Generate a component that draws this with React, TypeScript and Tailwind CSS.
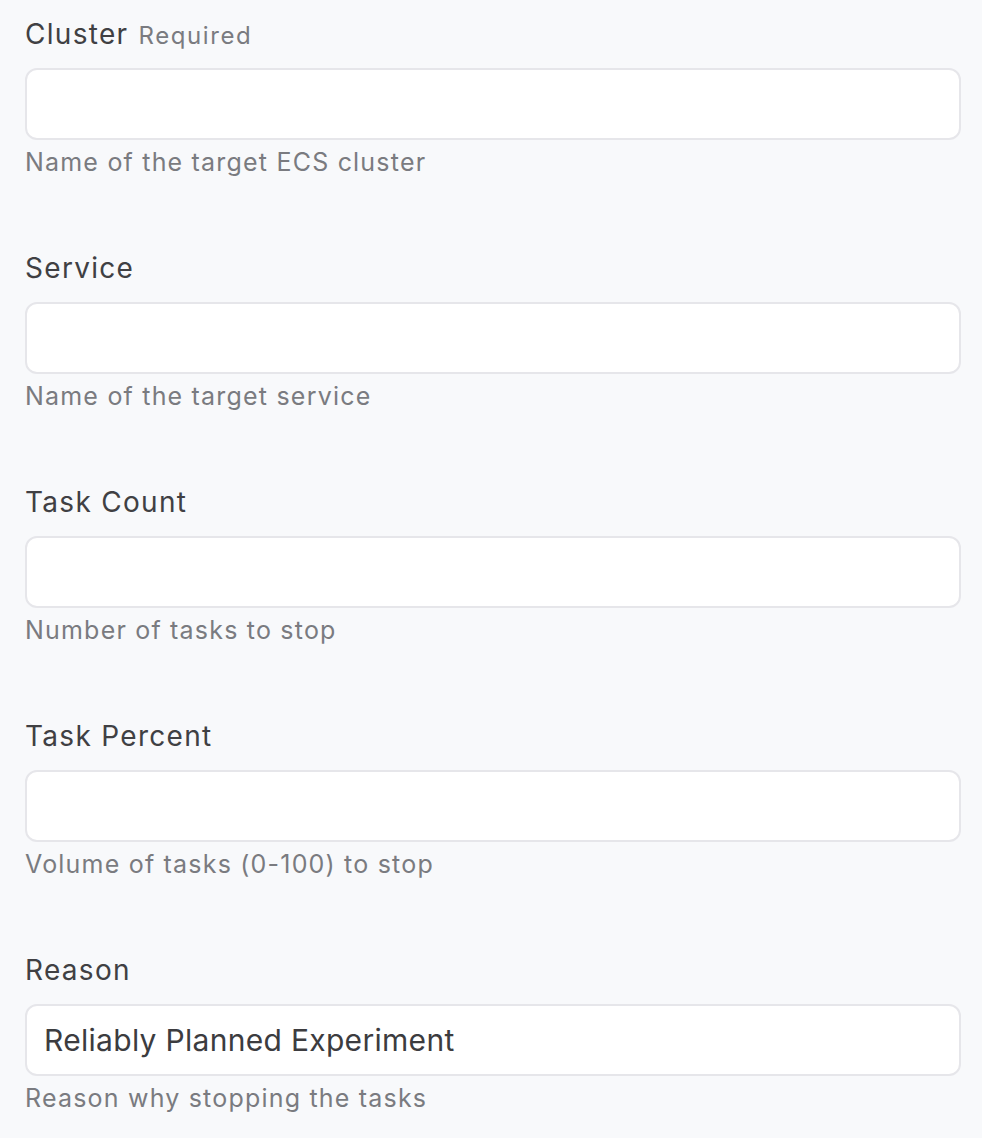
const fields = [
  { label: 'Cluster', required: true, help: 'Name of the target ECS cluster', value: '' },
  { label: 'Service', help: 'Name of the target service', value: '' },
  { label: 'Task Count', help: 'Number of tasks to stop', value: '' },
  { label: 'Task Percent', help: 'Volume of tasks (0-100) to stop', value: '' },
  { label: 'Reason', help: 'Reason why stopping the tasks', value: 'Reliably Planned Experiment' },
]

export default function App() {
  return (
    <div
      className="min-h-screen bg-[#f8f9fb] pl-[25px] pr-[21px] pt-[14px] pb-[22px]"
      style={{ fontFamily: 'Inter, "Noto Sans", sans-serif' }}
    >
      <div className="flex flex-col gap-[68px]">
        {fields.map(f => (
          <div key={f.label} className="flex flex-col">
            <label className="flex h-[40px] items-baseline text-[28px] leading-[40px] tracking-[1.3px] text-[#404043]">
              {f.label}
              {f.required && (
                <span className="ml-[10px] text-[24px] leading-none tracking-[1.6px] text-[#7a7b80]">Required</span>
              )}
            </label>
            <input
              defaultValue={f.value}
              className="mt-[14px] h-[72px] w-full rounded-[12px] border-2 border-[#e6e6ea] bg-white px-[17px] text-[30px] tracking-[0.3px] text-[#3c3c3f] outline-none"
            />
            <p className="mt-[4px] text-[25px] leading-[36px] tracking-[1.2px] text-[#7a7b80]">{f.help}</p>
          </div>
        ))}
      </div>
    </div>
  )
}
